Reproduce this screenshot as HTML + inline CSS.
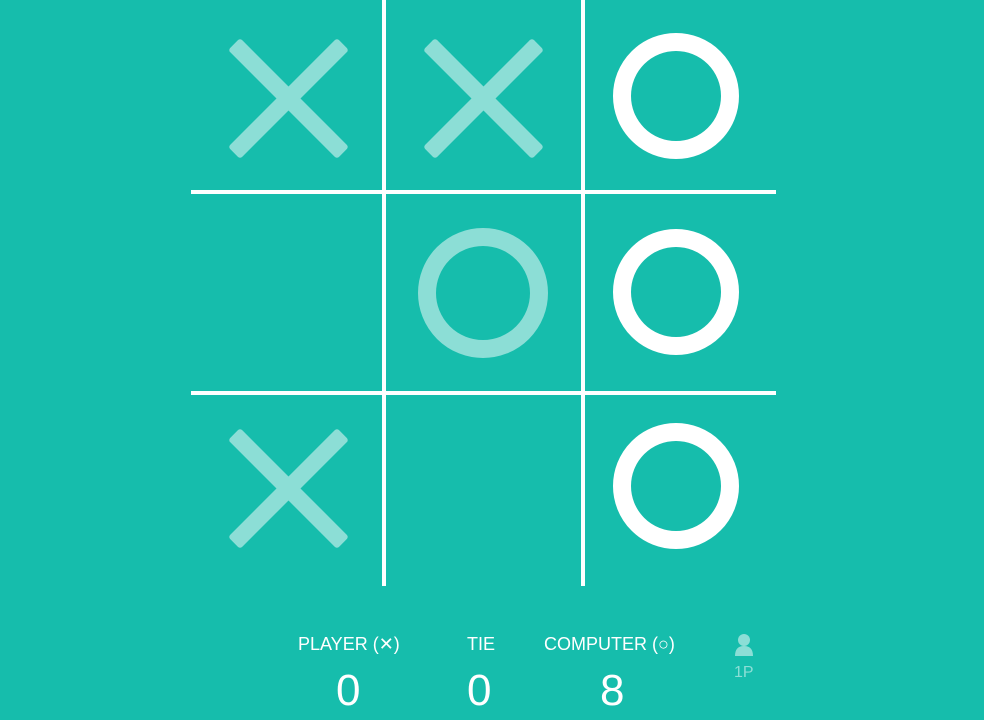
<!DOCTYPE html><html><head><style>
body{margin:0;width:984px;height:720px;background:#16bdac;overflow:hidden;font-family:"Liberation Sans",sans-serif;color:#fff}
.l{position:absolute;font-size:18px;top:634px}
.n{position:absolute;font-size:44px;top:666px;font-weight:300}
</style></head><body>
<svg width="984" height="720" style="position:absolute;left:0;top:0">
<defs><g id="x" fill="#8cded6"><rect x="-77" y="-8.5" width="154" height="17" rx="3" transform="rotate(45)"/><rect x="-77" y="-8.5" width="154" height="17" rx="3" transform="rotate(-45)"/></g></defs>
<g fill="#fff">
<rect x="382" y="0" width="4" height="586"/><rect x="581" y="0" width="4" height="586"/>
<rect x="191" y="190" width="585" height="4"/><rect x="191" y="391" width="585" height="4"/>
</g>
<use href="#x" transform="translate(288.5 98.5)"/>
<use href="#x" transform="translate(483.5 98.5)"/>
<use href="#x" transform="translate(288.5 488.5)"/>
<g stroke="#8cded6" fill="none"><circle cx="483" cy="293" r="56" stroke-width="18"/></g>
<g stroke="#fff" stroke-width="18" fill="none">
<circle cx="676" cy="96" r="54"/>
<circle cx="676" cy="292" r="54"/>
<circle cx="676" cy="486" r="54"/>
</g>
<g fill="#8cded6"><circle cx="744" cy="640" r="6"/><path d="M735 656q0-10 9-10q9 0 9 10z"/></g>
</svg>
<div class="l" style="left:298px">PLAYER (✕)</div>
<div class="l" style="left:467px">TIE</div>
<div class="l" style="left:544px">COMPUTER (○)</div>
<div class="l" style="left:734px;top:664px;font-size:16px;color:#8cded6">1P</div>
<div class="n" style="left:336px">0</div>
<div class="n" style="left:467px">0</div>
<div class="n" style="left:600px">8</div>
</body></html>
